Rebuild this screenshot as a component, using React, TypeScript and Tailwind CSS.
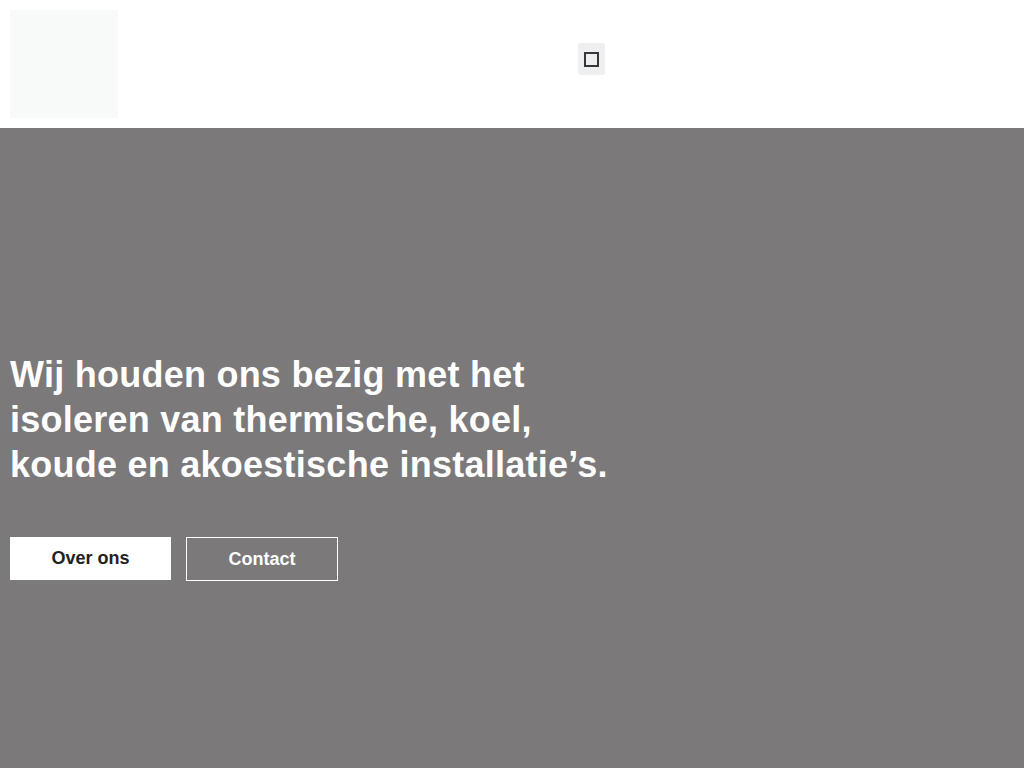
import React from "react";

export default function App() {
  return (
    <div className="min-h-[768px] flex flex-col font-['Liberation_Sans',Arial,sans-serif]">
      <header className="h-[128px] bg-white flex items-start px-[10px] pt-[10px] relative">
        <div className="w-[108px] h-[108px] bg-[#f8f9f9]" />
        <div className="flex-1 flex justify-center pt-[33px] pl-[50px]">
          <button className="w-[27px] h-[32px] bg-[#efefef] rounded-[3px] flex items-center justify-center">
            <span className="block w-[15px] h-[15px] border-[2.5px] border-[#34373c]" />
          </button>
        </div>
      </header>
      <main className="flex-1 h-[640px] bg-[#7b797a] px-[10px] pt-[224px] flex flex-col">
        <h1 className="max-w-[612px] text-white font-bold text-[36px] leading-[45px] tracking-[0.25px]">
          Wij houden ons bezig met het isoleren van thermische, koel, koude en akoestische installatie’s.
        </h1>
        <div className="flex gap-[15px] mt-[50px] items-start">
          <a className="w-[161px] h-[43px] bg-white text-[#222] font-bold text-[18px] flex items-center justify-center">
            Over ons
          </a>
          <a className="w-[152px] h-[44px] border border-white text-white font-bold text-[18px] flex items-center justify-center">
            Contact
          </a>
        </div>
      </main>
    </div>
  );
}
